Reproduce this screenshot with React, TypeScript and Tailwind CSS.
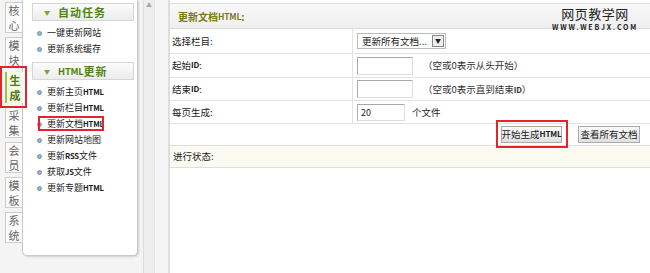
import React from "react";

const font = { fontFamily: '"Noto Sans CJK SC", "Liberation Sans", sans-serif' };

const tabs = [
  ["核", "心"],
  ["模", "块"],
  ["生", "成"],
  ["采", "集"],
  ["会", "员"],
  ["模", "板"],
  ["系", "统"],
];

// Render ASCII runs narrower, like half-width SimSun glyphs
function T({ text }: { text: string }) {
  const parts = text.split(/([A-Za-z]+)/).filter((p) => p.length > 0);
  return (
    <>
      {parts.map((p, i) =>
        /^[A-Za-z]+$/.test(p) ? (
          <span key={i} className="text-[0.85em] font-semibold tracking-[-0.2px]">
            {p}
          </span>
        ) : (
          <span key={i}>{p}</span>
        )
      )}
    </>
  );
}

function Tab({ chars, active }: { chars: string[]; active?: boolean }) {
  if (active) {
    return (
      <div className="relative h-[31px]">
        <div className="ml-[5px] h-[31px] w-[18px] border-l-2 border-[#9cbf4a] bg-[#f4f8e8] flex flex-col items-center justify-center text-[11px] leading-[15px] font-bold text-[#4d7a0c]">
          <span>{chars[0]}</span>
          <span>{chars[1]}</span>
        </div>
        <div className="absolute left-0 top-[-6px] w-[27px] h-[42px] border-2 border-[#e3242b]" />
      </div>
    );
  }
  return (
    <div className="ml-[5px] h-[31px] w-[17px] border border-r-0 border-[#cdcdcd] bg-[#fbfbfb] flex flex-col items-center justify-center text-[11px] leading-[15px] text-[#666]">
      <span>{chars[0]}</span>
      <span>{chars[1]}</span>
    </div>
  );
}

function Header({ title }: { title: string }) {
  return (
    <div className="w-[102px] h-[18px] border border-[#d6d6d6] bg-gradient-to-b from-[#fcfcfc] to-[#ececec] flex items-center pl-[11px] text-[11px] tracking-[1px] text-[#4f8412] font-bold whitespace-nowrap">
      <span className="text-[6px] text-[#7aa53a] mr-[7px]">▼</span>
      <T text={title} />
    </div>
  );
}

function Item({ text, boxed }: { text: string; boxed?: boolean }) {
  return (
    <div className="relative h-[16px] flex items-center text-[9px] text-[#1a1a1a] whitespace-nowrap">
      <span className="ml-[5px] mr-[5px] w-[3px] h-[3px] rounded-full bg-[#9fb3cc] border border-[#7990ad] box-content" />
      <span>
        <T text={text} />
      </span>
      {boxed && <div className="absolute left-[6px] top-[0px] w-[66px] h-[15px] border-2 border-[#e3242b]" />}
    </div>
  );
}

function Row({ label, h, children }: { label: string; h: string; children: React.ReactNode }) {
  return (
    <div className={`flex border-b border-[#e2e2e2] ${h}`}>
      <div className="w-[183px] pl-[2px] border-r border-[#e2e2e2] text-[9.5px] text-[#1a1a1a] flex items-center">
        <T text={label} />
      </div>
      <div className="flex-1 flex items-center pl-[4px]">{children}</div>
    </div>
  );
}

export default function App() {
  return (
    <div className="w-[650px] h-[273px] flex bg-[#f4f4f4] overflow-hidden" style={font}>
      {/* tabs */}
      <div className="w-[22px] flex flex-col gap-[4px] pt-[2px] z-10">
        {tabs.map((t, i) => (
          <Tab key={i} chars={t} active={i === 2} />
        ))}
      </div>
      {/* menu */}
      <div className="w-[116px] h-[256px] bg-white border border-[#c9c9c9] border-t-0 rounded-b-[5px] shadow-[1px_1px_2px_rgba(0,0,0,0.15)] pl-[9px] pt-[3px] flex flex-col">
        <Header title="自动任务" />
        <div className="pt-[4px] pb-[5px]">
          <Item text="一键更新网站" />
          <Item text="更新系统缓存" />
        </div>
        <Header title="HTML更新" />
        <div className="pt-[4px]">
          <Item text="更新主页HTML" />
          <Item text="更新栏目HTML" />
          <Item text="更新文档HTML" boxed />
          <Item text="更新网站地图" />
          <Item text="更新RSS文件" />
          <Item text="获取JS文件" />
          <Item text="更新专题HTML" />
        </div>
      </div>
      {/* scroll strip */}
      <div className="w-[32px] flex">
        <div className="w-[5px]" />
        <div className="w-[11px] border-l border-[#dcdcdc] bg-[#ededed] flex justify-center pt-[2px]">
          <span className="text-[6px] text-[#aaa] leading-none">▲</span>
        </div>
        <div className="w-[14px] bg-[#f5f5f5] border-l border-[#e6e6e6]" />
        <div className="w-[2px] bg-[#dedede]" />
      </div>
      {/* content */}
      <div className="flex-1 bg-white pt-[3px] relative">
        <div className="border-t border-[#e0e0e0] h-[25px] bg-gradient-to-b from-[#f8f8f8] to-[#efefef] flex items-center pl-[8px] text-[10px] font-bold text-[#7a7a10]">
          <T text="更新文档HTML:" />
        </div>
        <div className="border-t border-[#dcdcdc]">
          <Row label="选择栏目:" h="h-[25px]">
            <div className="w-[89px] h-[16px] border border-[#bcbcbc] flex items-center justify-between pl-[4px] pr-[1px] text-[9.5px] text-[#222] whitespace-nowrap">
              <span>更新所有文档...</span>
              <span className="w-[12px] h-[12px] border border-[#888] bg-[#eee] flex items-center justify-center text-[6px] leading-none">▼</span>
            </div>
          </Row>
          <Row label="起始ID:" h="h-[24px]">
            <div className="w-[56px] h-[18px] border border-[#aaa] border-r-[#ddd] border-b-[#ddd]" />
            <span className="ml-[10px] text-[9.5px] text-[#333] whitespace-nowrap">（空或0表示从头开始）</span>
          </Row>
          <Row label="结束ID:" h="h-[23px]">
            <div className="w-[56px] h-[18px] border border-[#aaa] border-r-[#ddd] border-b-[#ddd]" />
            <span className="ml-[10px] text-[9.5px] text-[#333] whitespace-nowrap">
              <T text="（空或0表示直到结束ID）" />
            </span>
          </Row>
          <Row label="每页生成:" h="h-[23px]">
            <div className="w-[48px] h-[17px] border border-[#aaa] border-r-[#ddd] border-b-[#ddd] text-[9px] pl-[3px] leading-[15px] text-[#222]">20</div>
            <span className="ml-[7px] text-[9.5px] text-[#222]">个文件</span>
          </Row>
          <div className="h-[21px] flex justify-end items-start pt-[2px] gap-[16px] pr-[10px]">
            <div className="relative">
              <div className="h-[17px] w-[61px] border border-[#aaa] bg-gradient-to-b from-[#fafafa] to-[#e0e0e0] text-[9.5px] text-[#222] flex items-center justify-center whitespace-nowrap">
                <T text="开始生成HTML" />
              </div>
              <div className="absolute left-[-5px] top-[-6px] w-[72px] h-[28px] border-2 border-[#e3242b]" />
            </div>
            <div className="h-[17px] w-[62px] border border-[#aaa] bg-gradient-to-b from-[#fafafa] to-[#e0e0e0] text-[9.5px] text-[#222] flex items-center justify-center whitespace-nowrap">查看所有文档</div>
          </div>
          <div className="h-[23px] border-t border-b border-[#dedede] bg-[#fafaf0] flex items-center pl-[3px] text-[9.5px] text-[#222]">进行状态:</div>
        </div>
        {/* watermark */}
        <div className="absolute right-[12px] top-[6px] flex flex-col items-center leading-none">
          <span className="text-[13px] leading-[15px] text-[#222] tracking-[0.5px]">网页教学网</span>
          <span className="text-[7px] leading-[8px] font-bold text-[#222] tracking-[1.8px] mt-[2px]">WWW.WEBJX.COM</span>
        </div>
      </div>
    </div>
  );
}
